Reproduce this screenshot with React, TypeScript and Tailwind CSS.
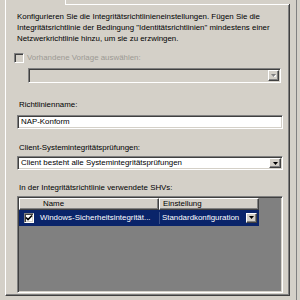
import React from "react";

const sunken =
  "border border-t-[#808080] border-l-[#808080] border-r-white border-b-white shadow-[inset_1px_1px_0_#404040,inset_-1px_-1px_0_#d4d0c8]";
const raised =
  "border border-t-white border-l-white border-r-[#404040] border-b-[#404040] shadow-[inset_-1px_-1px_0_#808080]";

function Arrow({ disabled }: { disabled?: boolean }) {
  return (
    <svg width="5" height="3" viewBox="0 0 5 3">
      {disabled && <polygon points="1,1 6,1 3.5,4" fill="#fff" />}
      <polygon points="0,0 5,0 2.5,3" fill={disabled ? "#808080" : "#000"} />
    </svg>
  );
}

function DropButton({ disabled, className }: { disabled?: boolean; className: string }) {
  return (
    <div className={`flex items-center justify-center bg-[#d4d0c8] ${raised} ${className}`}>
      <Arrow disabled={disabled} />
    </div>
  );
}

export default function App() {
  return (
    <div className="flex w-[300px] h-[300px] overflow-hidden bg-[#d4d0c8] font-['Liberation_Sans',Arial,sans-serif] text-[7.9px] text-black">
      <div className="flex w-[290px] flex-col">
        {/* tab strip */}
        <div className="flex h-[4px]">
          <div className="w-[5px]" />
          <div className="w-px bg-white" />
          <div className="w-[59px]" />
          <div className="w-px bg-white" />
        </div>

        {/* tab page */}
        <div className="ml-[5px] flex h-[292px] w-[285px] flex-col border-l border-r border-b border-l-white border-r-[#404040] border-b-[#404040] shadow-[inset_-1px_-1px_0_#808080]">
          <div className="flex h-px">
            <div className="w-[59px]" />
            <div className="flex-1 bg-white" />
          </div>

          <div className="flex flex-col pl-[11px] pt-[6px]">
            <p className="leading-[11px]">
              Konfigurieren Sie die Integritätsrichtlinieneinstellungen. Fügen Sie die
              <br />
              Integritätsrichtlinie der Bedingung "Identitätsrichtlinien" mindestens einer
              <br />
              Netzwerkrichtlinie hinzu, um sie zu erzwingen.
            </p>

            <div className="-ml-[3px] mt-[8px] flex h-[11px] items-center gap-[3px] text-[#9c9a94]">
              <div className={`h-[10px] w-[10px] bg-[#d4d0c8] ${sunken}`} />
              <span className="leading-[11px]">Vorhandene Vorlage auswählen:</span>
            </div>

            <div className={`ml-[11px] mt-[5px] flex h-[15px] w-[253px] items-center justify-end bg-[#d4d0c8] ${sunken}`}>
              <DropButton disabled className="mr-px h-[11px] w-[11px]" />
            </div>

            <div className="mt-[16px] pl-[2px] leading-[11px]">Richtlinienname:</div>
            <div className={`mt-[5px] flex h-[14px] w-[266px] items-center bg-white pl-[3px] ${sunken}`}>
              NAP-Konform
            </div>

            <div className="mt-[13px] pl-[2px] leading-[11px]">Client-Systemintegritätsprüfungen:</div>
            <div className={`mt-[3px] flex h-[14px] w-[266px] items-center justify-between bg-white pl-[3px] ${sunken}`}>
              <span>Client besteht alle Systemintegritätsprüfungen</span>
              <DropButton className="mr-px h-[10px] w-[12px]" />
            </div>

            <div className="mt-[12px] pl-[2px] leading-[11px]">In der Integritätsrichtlinie verwendete SHVs:</div>
            <div className={`mt-[3px] flex h-[97px] w-[266px] flex-col bg-[#808080] p-[1px] ${sunken}`}>
              <div className="flex h-[12px]">
                <div className={`flex w-[140px] items-center bg-[#d4d0c8] pl-[23px] ${raised}`}>Name</div>
                <div className={`flex w-[100px] items-center bg-[#d4d0c8] pl-[3px] ${raised}`}>Einstellung</div>
              </div>
              <div className="flex h-[16px] w-[240px] items-center bg-[#0a246a] text-white">
                <div className="flex w-[140px] items-center pl-[5px]">
                  <div className={`flex h-[10px] w-[10px] items-center justify-center bg-white ${sunken}`}>
                    <svg width="8" height="8" viewBox="0 0 8 8">
                      <path d="M1 3.5 L3 5.5 L7 1.5" stroke="#000" strokeWidth="1.6" fill="none" />
                    </svg>
                  </div>
                  <span className="ml-[6px]">Windows-Sicherheitsintegrität...</span>
                </div>
                <div className="flex w-[100px] items-center justify-between border-l border-l-[#3a5088] pl-[2px] pr-[2px]">
                  <span>Standardkonfiguration</span>
                  <DropButton className="h-[10px] w-[11px]" />
                </div>
              </div>
            </div>
          </div>
        </div>
      </div>
      <div className="w-[6px]" />
      <div className="w-px bg-[#808080]" />
    </div>
  );
}
